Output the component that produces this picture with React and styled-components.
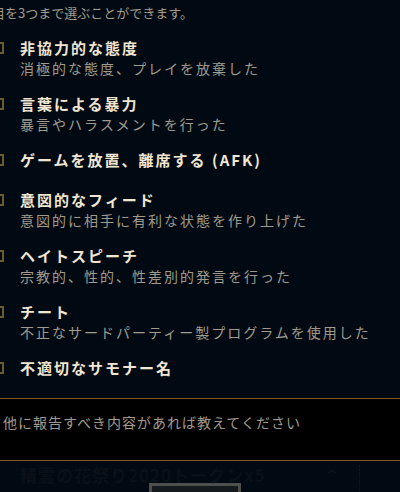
import React from 'react'
import styled, { createGlobalStyle } from 'styled-components'

const GlobalStyle = createGlobalStyle`
  body {
    margin: 0;
    background: #010a13;
    overflow: hidden;
  }
`

const Screen = styled.div`
  width: 400px;
  height: 492px;
  overflow: hidden;
  background: #010a13;
  font-family: "Noto Sans CJK JP", "Noto Sans", sans-serif;
`

const Body = styled.div`
  margin: -17px 0 0 -8px;
`

const Intro = styled.p`
  margin: 0 0 15px;
  font-size: 13px;
  line-height: 20px;
  color: #a09b8c;
  white-space: nowrap;
`

const List = styled.ul`
  list-style: none;
  margin: 0;
  padding: 0;
  display: flex;
  flex-direction: column;
  gap: 16px;
`

const Item = styled.li`
  display: grid;
  grid-template-columns: 12px 1fr;
  column-gap: 16px;
  min-height: 24px;
`

const Box = styled.span`
  box-sizing: border-box;
  width: 12px;
  height: 12px;
  margin-top: 4px;
  border: 2px solid #6f5a2e;
  background: #010a13;
`

const Texts = styled.div`
  display: flex;
  flex-direction: column;
`

const Title = styled.span`
  font-size: 15px;
  line-height: 20px;
  font-weight: 700;
  letter-spacing: 2px;
  color: #f0e6d2;
`

const Sub = styled.span`
  font-size: 14px;
  line-height: 20px;
  letter-spacing: 2px;
  color: #a09b8c;
`

const Comment = styled.div`
  box-sizing: border-box;
  height: 63px;
  margin-top: 16px;
  padding: 13px 3px 0;
  background: #000;
  border-top: 1px solid #785a28;
  border-bottom: 1px solid #785a28;
  font-size: 14px;
  line-height: 20px;
  letter-spacing: 1px;
  color: #a09b8c;
`

const Footer = styled.div`
  position: relative;
  padding: 5px 0 0 20px;
`

const Reward = styled.div`
  font-size: 17px;
  line-height: 18px;
  font-weight: 700;
  color: #0a1017;
  letter-spacing: 1px;
`

const Button = styled.div`
  box-sizing: border-box;
  width: 92px;
  height: 24px;
  margin: -1px 0 0 129px;
  border: 3px solid #4e4e4c;
  border-bottom: none;
  background: #151a1f;
`

const Chevron = styled.span`
  position: absolute;
  top: 0;
  left: 327px;
  font-size: 10px;
  color: #151c24;
`

const Divider = styled.span`
  position: absolute;
  top: 4px;
  left: 359px;
  height: 30px;
  border-left: 1px dotted #141b22;
`

const reasons = [
  { title: '非協力的な態度', sub: '消極的な態度、プレイを放棄した' },
  { title: '言葉による暴力', sub: '暴言やハラスメントを行った' },
  { title: 'ゲームを放置、離席する (AFK)' },
  { title: '意図的なフィード', sub: '意図的に相手に有利な状態を作り上げた' },
  { title: 'ヘイトスピーチ', sub: '宗教的、性的、性差別的発言を行った' },
  { title: 'チート', sub: '不正なサードパーティー製プログラムを使用した' },
  { title: '不適切なサモナー名' },
]

const App = () =>
  <Screen>
    <GlobalStyle />
    <Body>
      <Intro>
        報告したいプレイヤーの行為について該当する項<br />
        目を3つまで選ぶことができます。
      </Intro>
      <List>
        {reasons.map(r =>
          <Item key={r.title}>
            <Box />
            <Texts>
              <Title>{r.title}</Title>
              {r.sub && <Sub>{r.sub}</Sub>}
            </Texts>
          </Item>
        )}
      </List>
    </Body>
    <Comment>他に報告すべき内容があれば教えてください</Comment>
    <Footer>
      <Reward>精霊の花祭り2020トークンx5</Reward>
      <Button />
      <Chevron>︿</Chevron>
      <Divider />
    </Footer>
  </Screen>

export default App
